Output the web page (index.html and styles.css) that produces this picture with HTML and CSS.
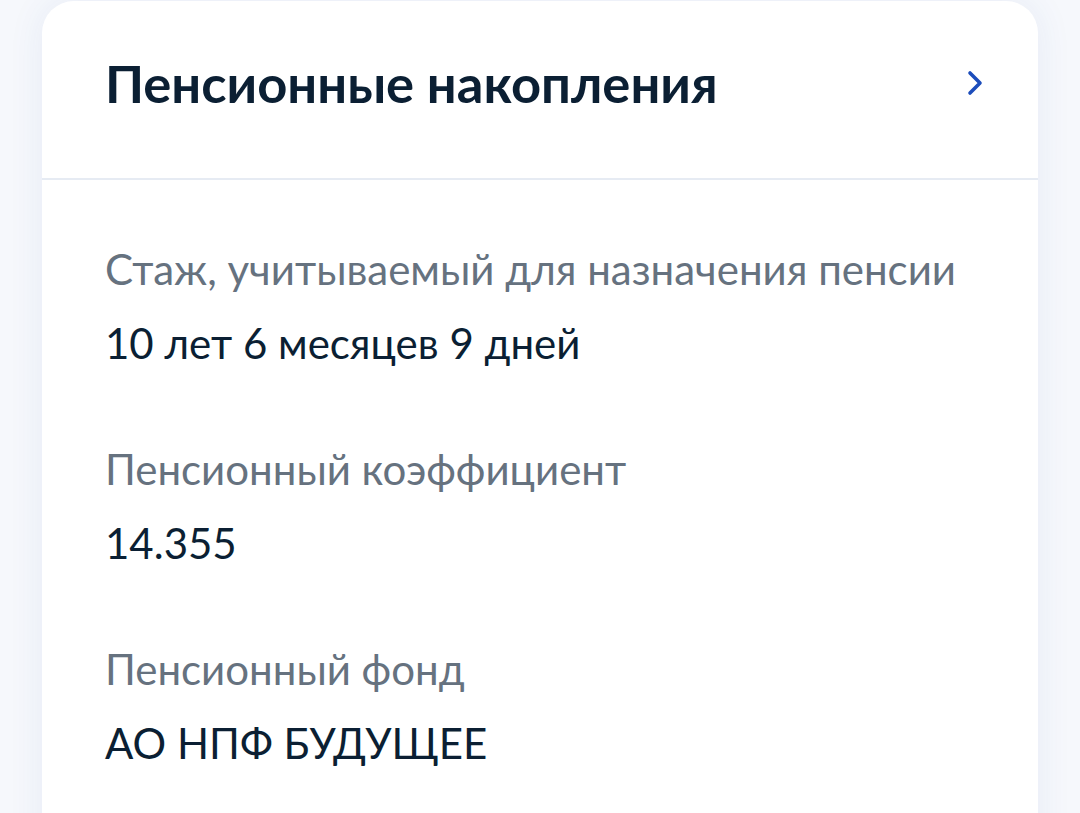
FILE: index.html
```html
<!DOCTYPE html>
<html lang="ru">
<head>
<meta charset="utf-8">
<link rel="stylesheet" href="styles.css">
</head>
<body>
<div class="page">
  <section class="card">
    <header class="card-header">
      <h2 class="card-title">Пенсионные накопления</h2>
      <svg class="chevron" width="16" height="26" viewBox="0 0 16 26" aria-hidden="true">
        <polyline points="3,3 13,13 3,23" fill="none" stroke="#1c4dbb" stroke-width="3.6" stroke-linecap="round" stroke-linejoin="round"/>
      </svg>
    </header>
    <div class="card-body">
      <div class="item">
        <div class="label">Стаж, учитываемый для назначения пенсии</div>
        <div class="value">10 лет 6 месяцев 9 дней</div>
      </div>
      <div class="item">
        <div class="label">Пенсионный коэффициент</div>
        <div class="value">14.355</div>
      </div>
      <div class="item">
        <div class="label">Пенсионный фонд</div>
        <div class="value">АО НПФ БУДУЩЕЕ</div>
      </div>
    </div>
  </section>
</div>
</body>
</html>
```

FILE: styles.css
```css
html, body {
  margin: 0;
  padding: 0;
  height: 100%;
  overflow: hidden;
}

body {
  background: #f6f8fc;
  font-family: "Lato", "Liberation Sans", sans-serif;
  color: #0b1f33;
}

.page {
  padding: 1px 42px 0 42px;
}

.card {
  background: #ffffff;
  border-radius: 32px 32px 0 0;
  box-shadow: 0 0 36px rgba(40, 80, 170, 0.08);
  height: 900px;
}

.card-header {
  display: flex;
  align-items: center;
  justify-content: space-between;
  padding: 52px 55px 65px 63px;
  border-bottom: 2px solid #e6ebf3;
}

.card-title {
  margin: 0;
  font-size: 52.5px;
  line-height: 60px;
  font-weight: 700;
  color: #0b1f33;
}

.chevron {
  display: block;
  flex: none;
}

.card-body {
  display: flex;
  flex-direction: column;
  gap: 78px;
  padding: 65px 63px 0 63px;
}

.label {
  font-size: 42px;
  line-height: 48px;
  color: #66727f;
}

.value {
  margin-top: 26px;
  font-size: 42px;
  line-height: 48px;
  color: #0b1f33;
}
```
